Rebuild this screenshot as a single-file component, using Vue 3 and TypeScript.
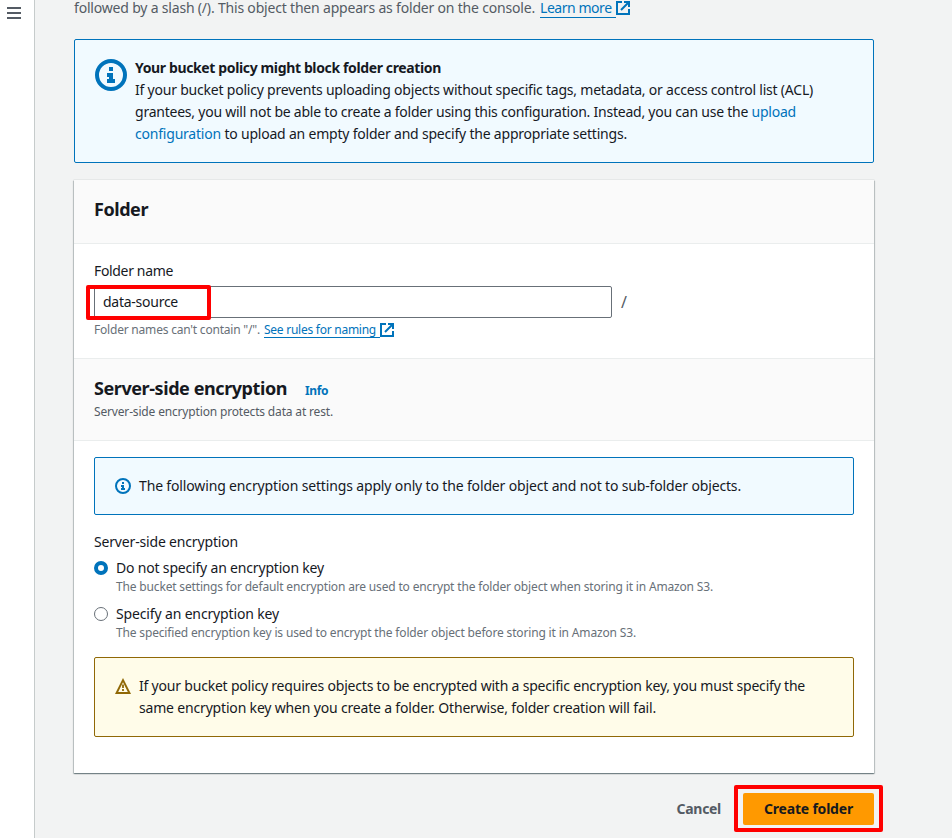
<script setup lang="ts">
import { ref } from 'vue'

const folderName = ref('data-source')
const selected = ref('none')

const options = [
  {
    value: 'none',
    label: 'Do not specify an encryption key',
    description:
      'The bucket settings for default encryption are used to encrypt the folder object when storing it in Amazon S3.',
  },
  {
    value: 'specify',
    label: 'Specify an encryption key',
    description:
      'The specified encryption key is used to encrypt the folder object before storing it in Amazon S3.',
  },
]
</script>

<template>
  <div class="page">
    <aside class="sidebar">
      <button class="menu" aria-label="Open navigation">
        <span></span><span></span><span></span>
      </button>
    </aside>

    <main class="content">
      <p class="intro">
        <span class="intro-text">followed by a slash (/). This object then appears as folder on the console.</span>
        <a class="ext"><span class="ext-label learn">Learn more</span><svg viewBox="0 0 14 14"><path d="M6 1H1v12h12V8" /><path d="M8 1h5v5M13 1L5 9" /></svg></a>
      </p>

      <section class="alert info top-alert">
        <svg class="big-icon" viewBox="0 0 32 32">
          <circle cx="16" cy="16" r="14" fill="none" stroke="currentColor" stroke-width="4" />
          <path fill="currentColor" d="M14 8h4v4h-4zM12 14h6v6h2v4h-8v-4h2v-2h-2z" />
        </svg>
        <div class="alert-body">
          <strong>Your bucket policy might block folder creation</strong>
          <span class="l1">If your bucket policy prevents uploading objects without specific tags, metadata, or access control list (ACL)</span>
          <span class="l2">grantees, you will not be able to create a folder using this configuration. Instead, you can use the <a>upload</a></span>
          <span class="l3"><a>configuration</a> to upload an empty folder and specify the appropriate settings.</span>
        </div>
      </section>

      <section class="panel">
        <header class="panel-header">
          <h2 class="folder-title">Folder</h2>
        </header>

        <div class="folder-form">
          <label class="field-label" for="folder-name">Folder name</label>
          <div class="input-row">
            <input id="folder-name" v-model="folderName" type="text" />
            <span class="slash">/</span>
            <i class="mark mark-input"></i>
          </div>
          <div class="hint">
            <span class="hint-text">Folder names can't contain "/".</span>
            <a class="ext"><span class="ext-label rules">See rules for naming</span><svg viewBox="0 0 14 14"><path d="M6 1H1v12h12V8" /><path d="M8 1h5v5M13 1L5 9" /></svg></a>
          </div>
        </div>

        <header class="panel-header second">
          <div class="title-row">
            <h2 class="sse-title">Server-side encryption</h2>
            <a class="info-link">Info</a>
          </div>
          <p class="subtitle">Server-side encryption protects data at rest.</p>
        </header>

        <div class="sse-form">
          <div class="alert info">
            <svg class="small-icon" viewBox="0 0 16 16">
              <circle cx="8" cy="8" r="7" fill="none" stroke="currentColor" stroke-width="2" />
              <path fill="currentColor" d="M7 4h2v2H7zM6 7h3v3h1v2H6v-2h1V9H6z" />
            </svg>
            <div class="alert-body">
              <span class="m1">The following encryption settings apply only to the folder object and not to sub-folder objects.</span>
            </div>
          </div>

          <div class="group-label">Server-side encryption</div>
          <div class="radios">
            <label v-for="o in options" :key="o.value" class="option" :class="o.value" @click="selected = o.value">
              <span class="radio" :class="{ on: selected === o.value }"></span>
              <span class="option-text">
                <span class="option-label">{{ o.label }}</span>
                <span class="option-desc">{{ o.description }}</span>
              </span>
            </label>
          </div>

          <div class="alert warning">
            <svg class="small-icon" viewBox="0 0 16 16" fill="currentColor">
              <path fill-rule="evenodd" d="M8 0l8 16H0zM8 4.2L3.2 14h9.6z" />
              <path d="M7.1 6.5h1.8V10H7.1zM7.1 11h1.8v2H7.1z" />
            </svg>
            <div class="alert-body">
              <span class="w1">If your bucket policy requires objects to be encrypted with a specific encryption key, you must specify the</span>
              <span class="w2">same encryption key when you create a folder. Otherwise, folder creation will fail.</span>
            </div>
          </div>
        </div>
      </section>

      <footer class="actions">
        <button class="cancel">Cancel</button>
        <div class="create-wrap">
          <button class="create">Create folder</button>
          <i class="mark mark-create"></i>
        </div>
      </footer>
    </main>
  </div>
</template>

<style>
body {
  background: #f2f3f3;
  overflow: hidden;
}
</style>

<style scoped>
.page {
  display: flex;
  height: 838px;
  overflow: hidden;
  background: #f2f3f3;
  color: #16191f;
  font: 14px/22px "Noto Sans", "Open Sans", sans-serif;
  white-space: nowrap;
}
.page * {
  box-sizing: border-box;
}
.sidebar {
  width: 35px;
  flex: none;
  background: #fff;
  border-right: 1px solid #c6cbcb;
}
.menu {
  display: flex;
  flex-direction: column;
  gap: 3px;
  margin: 7px 0 0 7px;
  padding: 0;
  border: 0;
  background: none;
}
.menu span {
  width: 14px;
  height: 2px;
  background: #545b64;
}
.content {
  width: 800px;
  margin-left: 39px;
}
p,
h2 {
  margin: 0;
}
a {
  color: #0073bb;
}
.intro {
  display: flex;
  gap: 5px;
  height: 19px;
  line-height: 16px;
  color: #545b64;
}
.intro-text {
  width: 461px;
  letter-spacing: -0.189px;
}
.ext {
  display: flex;
  align-items: center;
}
.intro .ext {
  align-items: flex-start;
}
.ext svg {
  width: 14px;
  height: 14px;
  fill: none;
  stroke: currentColor;
  stroke-width: 2;
}
.intro .ext svg {
  margin-top: 1px;
}
.ext-label {
  border-bottom: 1px solid #0073bb;
}
.learn {
  width: 76px;
  height: 18px;
  letter-spacing: -0.45px;
}
.alert {
  display: flex;
  gap: 8px;
  padding: 17px 20px;
  border: 1px solid;
  border-radius: 2px;
}
.alert.info {
  border-color: #0073bb;
  background: #f1faff;
  color: #0073bb;
}
.alert.warning {
  border-color: #906806;
  background: #fffce9;
  color: #906806;
}
.alert-body {
  display: flex;
  flex-direction: column;
  color: #16191f;
}
.top-alert {
  margin-top: 20px;
}
.big-icon {
  width: 32px;
  height: 32px;
  margin-top: 2px;
}
.small-icon {
  width: 16px;
  height: 16px;
  margin-top: 3px;
}
.alert-body strong { letter-spacing: -0.367px; }
.l1 { letter-spacing: -0.213px; }
.l2 { letter-spacing: -0.232px; }
.l3 { letter-spacing: -0.208px; }
.m1 { letter-spacing: -0.15px; }
.w1 { letter-spacing: -0.202px; }
.w2 { letter-spacing: -0.177px; }

.panel {
  margin-top: 17px;
  height: 593px;
  background: #fff;
  box-shadow: 0 1px 1px 0 rgba(0, 28, 36, 0.3), 1px 1px 1px 0 rgba(0, 28, 36, 0.15),
    -1px 1px 1px 0 rgba(0, 28, 36, 0.15), 0 0 0 0.5px #d9dede;
}
.panel-header {
  height: 64px;
  padding: 18px 20px 0;
  background: #fafafa;
  border-bottom: 1px solid #eaeded;
}
h2 {
  font-size: 18px;
  line-height: 22px;
  font-weight: 700;
}
.folder-title {
  letter-spacing: -0.444px;
}
.folder-form {
  height: 114px;
  padding: 16px 20px 0;
}
.field-label {
  display: block;
  letter-spacing: -0.343px;
}
.input-row {
  position: relative;
  display: flex;
  align-items: center;
  gap: 9px;
  margin-top: 4px;
}
input {
  width: 518px;
  height: 32px;
  padding: 0 8px 2px;
  border: 1px solid #687078;
  border-radius: 2px;
  background: #fff;
  color: #16191f;
  font: inherit;
  letter-spacing: -0.257px;
  outline: none;
}
.slash {
  color: #545b64;
  font-size: 16px;
}
.mark {
  position: absolute;
  border: 4px solid #f00;
  border-radius: 2px;
  pointer-events: none;
}
.mark-input {
  left: -8px;
  top: -1px;
  width: 125px;
  height: 35px;
}
.hint {
  display: flex;
  gap: 4px;
  margin-top: 4px;
  color: #687078;
  font-size: 12px;
  line-height: 16px;
}
.hint-text {
  width: 166px;
  letter-spacing: -0.205px;
}
.rules {
  width: 116px;
  height: 16px;
  letter-spacing: -0.254px;
}
.second {
  height: 83px;
  border-top: 1px solid #eaeded;
}
.title-row {
  display: flex;
  gap: 18px;
}
.sse-title {
  width: 193px;
  letter-spacing: -0.424px;
}
.info-link {
  font-size: 12px;
  font-weight: 700;
  line-height: 28px;
  height: 22px;
  letter-spacing: -0.4px;
}
.subtitle {
  margin-top: 3px;
  color: #545b64;
  font-size: 12px;
  line-height: 20px;
  letter-spacing: -0.165px;
}
.sse-form {
  padding: 16px 20px 0;
}
.group-label {
  margin-top: 16px;
  letter-spacing: -0.169px;
}
.radios {
  display: flex;
  flex-direction: column;
  gap: 8px;
  margin: 4px 0 16px;
}
.option {
  display: flex;
  gap: 8px;
}
.radio {
  width: 14px;
  height: 14px;
  margin-top: 4px;
  border: 1px solid #687078;
  border-radius: 50%;
  background: #fff;
}
.radio.on {
  border: 4px solid #0073bb;
}
.option-text {
  display: flex;
  flex-direction: column;
}
.option-label {
  letter-spacing: -0.184px;
}
.option-desc {
  color: #687078;
  font-size: 12px;
  line-height: 16px;
  letter-spacing: -0.163px;
}
.specify .option-label { letter-spacing: -0.149px; }
.specify .option-desc { letter-spacing: -0.159px; }

.actions {
  display: flex;
  justify-content: flex-end;
  align-items: center;
  gap: 22px;
  margin-top: 20px;
}
.actions button {
  height: 32px;
  padding: 0;
  border: 0;
  background: none;
  font: inherit;
  font-weight: 700;
}
.actions .cancel {
  color: #545b64;
  letter-spacing: -0.3px;
}
.create-wrap {
  position: relative;
  display: flex;
}
.actions .create {
  width: 131px;
  border-radius: 2px;
  background: #ff9900;
  color: #16191f;
  letter-spacing: -0.199px;
}
.mark-create {
  left: -9px;
  top: -8px;
  width: 149px;
  height: 47px;
}
</style>
